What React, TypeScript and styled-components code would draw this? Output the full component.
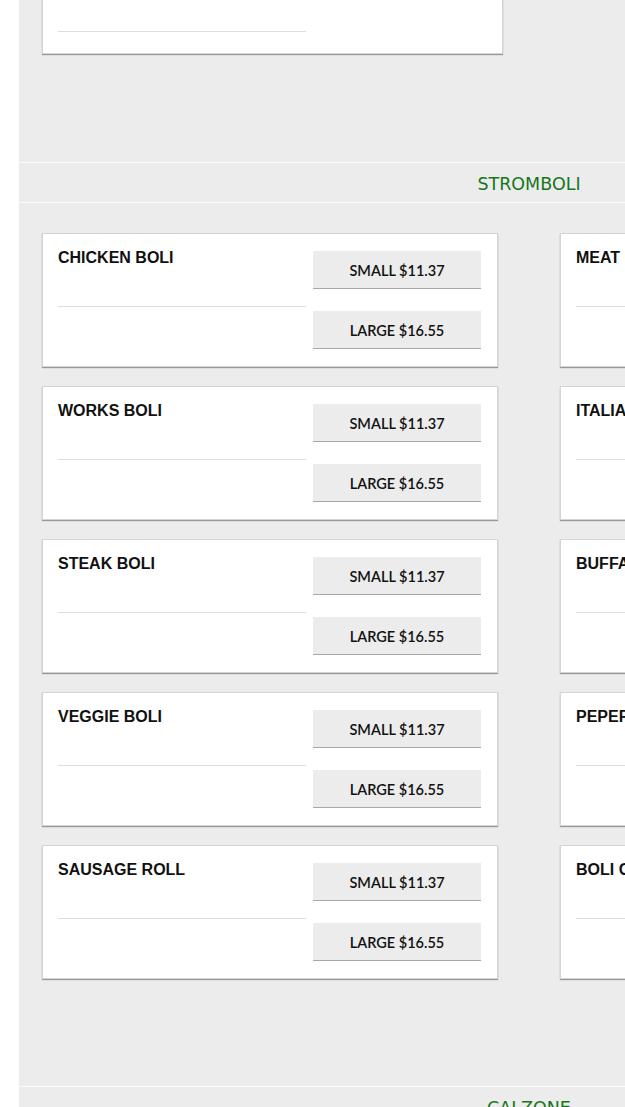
import * as React from "react";
import styled, { createGlobalStyle } from "styled-components";

const GlobalStyle = createGlobalStyle`
  html, body {
    margin: 0;
    padding: 0;
    background: #ffffff;
    overflow: hidden;
  }
`;

type Item = { name: string; small: string; large: string };

const leftItems: Item[] = [
  { name: "CHICKEN BOLI", small: "$11.37", large: "$16.55" },
  { name: "WORKS BOLI", small: "$11.37", large: "$16.55" },
  { name: "STEAK BOLI", small: "$11.37", large: "$16.55" },
  { name: "VEGGIE BOLI", small: "$11.37", large: "$16.55" },
  { name: "SAUSAGE ROLL", small: "$11.37", large: "$16.55" },
];

const rightItems: Item[] = [
  { name: "MEAT BOLI", small: "$11.37", large: "$16.55" },
  { name: "ITALIAN BOLI", small: "$11.37", large: "$16.55" },
  { name: "BUFFALO CHICKEN BOLI", small: "$11.37", large: "$16.55" },
  { name: "PEPERONI BOLI", small: "$11.37", large: "$16.55" },
  { name: "BOLI CHEESESTEAK", small: "$11.37", large: "$16.55" },
];

// interleave so the grid fills left/right per row
const stromboli: Item[] = leftItems.flatMap((it, i) => [it, rightItems[i]]);

const MenuItemCard = ({ item }: { item: Item }) => (
  <Card>
    <InfoCol>
      <TitleArea>
        <ItemName>{item.name}</ItemName>
      </TitleArea>
    </InfoCol>
    <PriceCol>
      <PriceButton>SMALL {item.small}</PriceButton>
      <PriceButton>LARGE {item.large}</PriceButton>
    </PriceCol>
  </Card>
);

const App = () => {
  return (
    <>
      <GlobalStyle />
      <Page>
        <Main>
          <CardGrid $top>
            <TailCard>
              <TailLine />
            </TailCard>
          </CardGrid>
          <SectionHeader>STROMBOLI</SectionHeader>
          <CardGrid>
            {stromboli.map((it, i) => (
              <MenuItemCard key={i} item={it} />
            ))}
          </CardGrid>
          <SectionHeader>CALZONE</SectionHeader>
          <CardGrid>
            {leftItems.map((it, i) => (
              <MenuItemCard key={i} item={it} />
            ))}
          </CardGrid>
        </Main>
      </Page>
    </>
  );
};

const Page = styled.div`
  padding-left: 19px;
  width: 1100px;
`;

const Main = styled.main`
  width: 1020px;
  background: #ececec;
`;

const CardGrid = styled.section<{ $top?: boolean }>`
  display: grid;
  grid-template-columns: 456px 456px;
  column-gap: 62px;
  row-gap: 19px;
  padding: ${(p) => (p.$top ? "0 23px 108px" : "30px 23px 107px")};
`;

const SectionHeader = styled.h2`
  margin: 0;
  box-sizing: border-box;
  height: 41px;
  padding-top: 3px;
  border-top: 1px solid #fafafa;
  border-bottom: 1px solid #fafafa;
  display: flex;
  align-items: center;
  justify-content: center;
  font-family: "DejaVu Sans", Verdana, sans-serif;
  font-size: 17.5px;
  font-weight: normal;
  color: #17761a;
`;

const Card = styled.article`
  display: flex;
  gap: 7px;
  background: #ffffff;
  border: 1px solid #d4d4d4;
  box-shadow: 0 1px 1px rgba(0, 0, 0, 0.35);
  padding: 17px 16px 17px 15px;
`;

const TailCard = styled.article`
  box-sizing: border-box;
  width: 461px;
  height: 54px;
  background: #ffffff;
  border: 1px solid #d4d4d4;
  border-top: none;
  box-shadow: 0 1px 1px rgba(0, 0, 0, 0.35);
  padding: 0 15px;
`;

const TailLine = styled.div`
  width: 248px;
  height: 31px;
  border-bottom: 1px solid #dddddd;
`;

const InfoCol = styled.div`
  width: 248px;
  flex-shrink: 0;
`;

const TitleArea = styled.div`
  height: 56px;
  border-bottom: 1px solid #dddddd;
`;

const ItemName = styled.h3`
  margin: -1px 0 0;
  font-family: "Liberation Sans", Arial, sans-serif;
  font-weight: bold;
  font-size: 16px;
  line-height: 1;
  color: #111111;
`;

const PriceCol = styled.div`
  flex: 1;
  display: flex;
  flex-direction: column;
  gap: 22px;
`;

const PriceButton = styled.button`
  height: 38px;
  border: none;
  border-bottom: 1px solid #a8a8a8;
  background: #ececec;
  font-family: Lato, "Open Sans", sans-serif;
  font-weight: 600;
  font-size: 14.5px;
  color: #111111;
  padding: 1px 0 0;
  cursor: pointer;
`;

export default App;
